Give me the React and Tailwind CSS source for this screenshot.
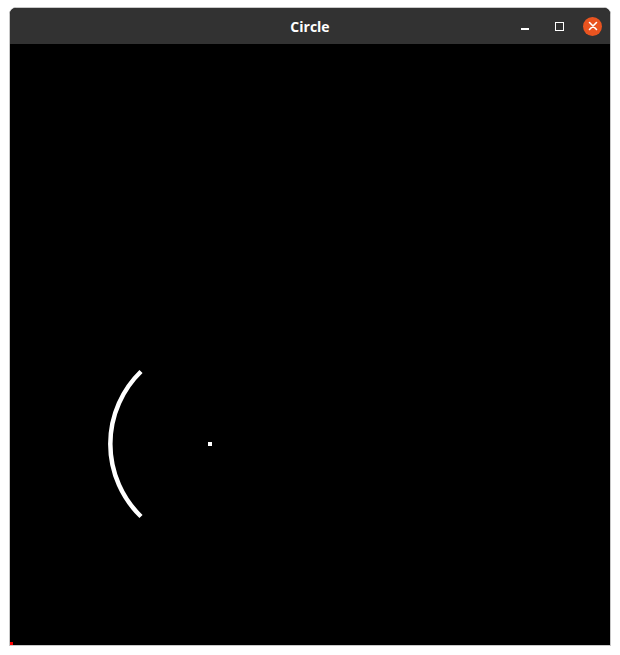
export default function App() {
  return (
    <div className="w-[620px] h-[655px] bg-white pt-[7px] px-[9px]">
      <div className="w-[602px] border border-[#c8c8c8] rounded-t-[7px] overflow-hidden bg-black">
        <div className="relative h-[36px] bg-[#323232] flex items-center justify-center">
          <span className="text-[14px] font-bold text-white font-['Open_Sans','Noto_Sans',sans-serif]">
            Circle
          </span>
          <div className="absolute right-[8px] top-0 h-full flex items-center gap-[14px]">
            <div className="w-[20px] h-[20px] flex items-center justify-center">
              <div className="w-[8px] h-[1.5px] bg-white mt-[6px]" />
            </div>
            <div className="w-[20px] h-[20px] flex items-center justify-center">
              <div className="w-[9px] h-[9px] border-[1.5px] border-white" />
            </div>
            <div className="w-[19px] h-[19px] rounded-full bg-[#e95420] flex items-center justify-center">
              <svg width="10" height="10" viewBox="0 0 10 10">
                <path d="M1.5 1.5 L8.5 8.5 M8.5 1.5 L1.5 8.5" stroke="white" strokeWidth="1.6" strokeLinecap="round" />
              </svg>
            </div>
          </div>
        </div>
        <svg width="600" height="601" viewBox="0 0 600 601" className="block">
          <rect x="0" y="0" width="600" height="601" fill="black" />
          <path d="M 131 327.5 A 101 101 0 0 0 131 472.5" stroke="white" strokeWidth="4.5" fill="none" />
          <rect x="198" y="398" width="4" height="4" fill="white" />
          <rect x="0" y="598" width="3" height="3" fill="red" />
        </svg>
      </div>
    </div>
  )
}
